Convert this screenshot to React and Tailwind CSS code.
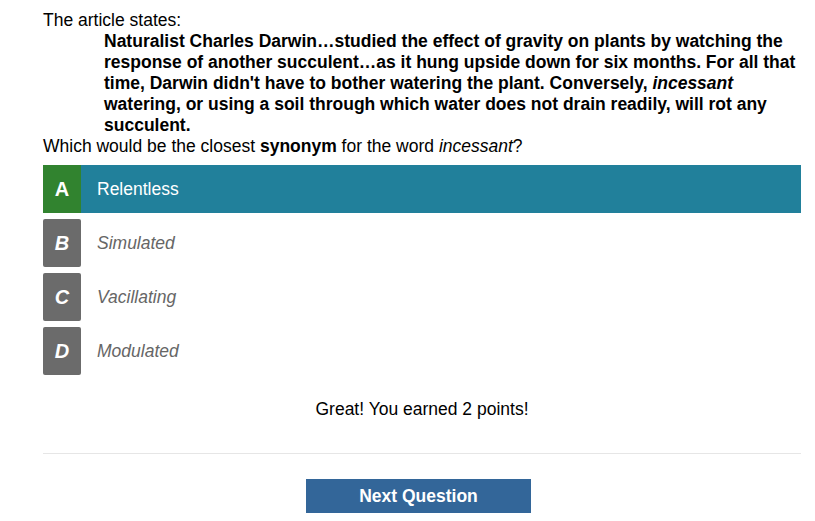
const options = [
  { key: 'A', text: 'Relentless', correct: true },
  { key: 'B', text: 'Simulated' },
  { key: 'C', text: 'Vacillating' },
  { key: 'D', text: 'Modulated' },
];

export default function App() {
  return (
    <div className="min-h-screen bg-white font-['Liberation_Sans',Arial,sans-serif] text-[17.5px] leading-[21px] text-black">
      <div className="ml-[43px] w-[758px] pt-[10px]">
        <p>The article states:</p>
        <p className="ml-[61px] font-bold">
          Naturalist Charles Darwin…studied the effect of gravity on plants by watching the response of another succulent…as it hung upside down for six months. For all that time, Darwin didn't have to bother watering the plant. Conversely, <i>incessant</i> watering, or using a soil through which water does not drain readily, will rot any succulent.
        </p>
        <p>
          Which would be the closest <b>synonym</b> for the word <i>incessant</i>?
        </p>

        {/* answers */}
        <div className="mt-[8px] flex flex-col gap-[6px]">
          {options.map(o => (
            <div key={o.key} className={`flex h-[48px] items-center ${o.correct ? 'bg-[#21809b]' : ''}`}>
              <div className={`flex h-full w-[38px] items-center justify-center text-[20px] font-bold text-white ${o.correct ? 'bg-[#31832f]' : 'rounded-[2px] bg-[#6b6b6b] italic'}`}>
                {o.key}
              </div>
              <span className={`ml-[16px] ${o.correct ? 'text-white' : 'italic text-[#666]'}`}>{o.text}</span>
            </div>
          ))}
        </div>

        <p className="mt-[24px] text-center">Great! You earned 2 points!</p>
        <div className="mt-[33px] h-px bg-[#e6e6e6]" />
        <button className="ml-[263px] mt-[25px] flex h-[34px] w-[225px] items-center justify-center bg-[#336699] font-bold text-white">
          Next Question
        </button>
      </div>
    </div>
  );
}
